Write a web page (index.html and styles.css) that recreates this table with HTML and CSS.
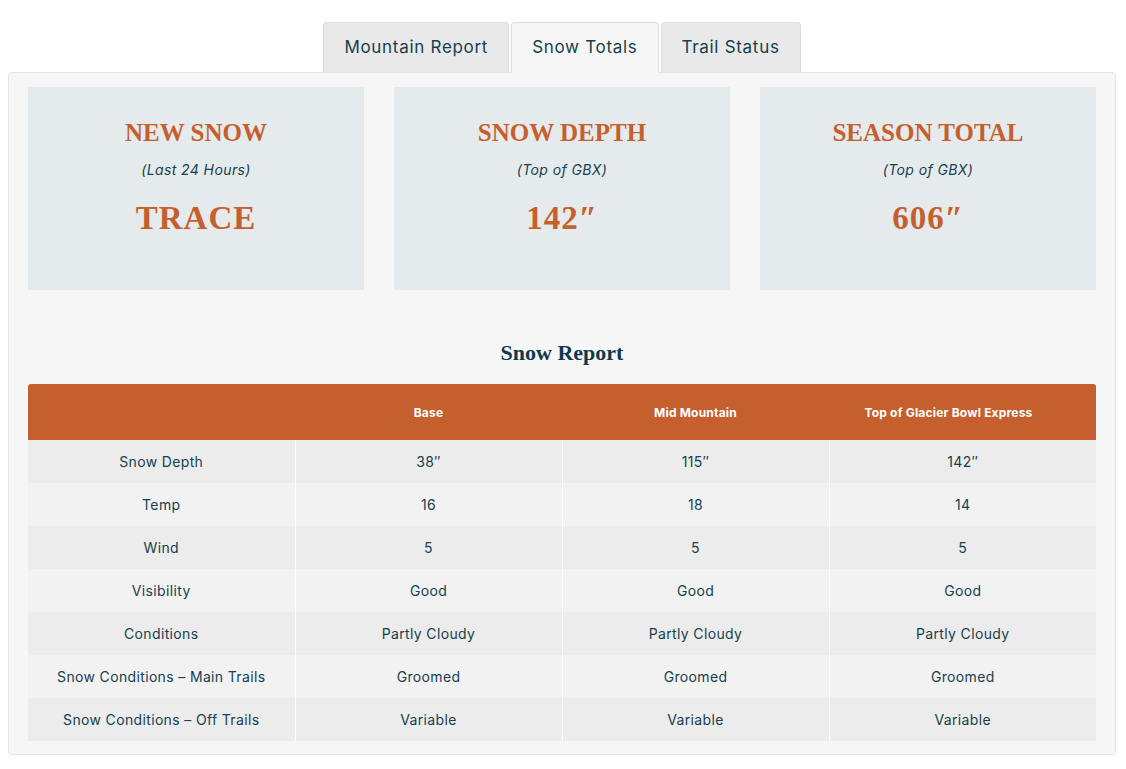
FILE: index.html
```html
<!DOCTYPE html>
<html lang="en">
<head>
  <meta charset="UTF-8">
  <title>Snow Totals</title>
  <meta name="viewport" content="width=device-width, initial-scale=1">
  <link rel="stylesheet" href="styles.css">
</head>
<body>
  <div class="report">
    <div class="tabs">
      <div class="tab">Mountain Report</div>
      <div class="tab active">Snow Totals</div>
      <div class="tab">Trail Status</div>
    </div>

    <div class="panel">
      <div class="cards">
        <div class="card">
          <h2>NEW SNOW</h2>
          <p class="sub">(Last 24 Hours)</p>
          <div class="value">TRACE</div>
        </div>
        <div class="card">
          <h2>SNOW DEPTH</h2>
          <p class="sub">(Top of GBX)</p>
          <div class="value">142″</div>
        </div>
        <div class="card">
          <h2>SEASON TOTAL</h2>
          <p class="sub">(Top of GBX)</p>
          <div class="value">606″</div>
        </div>
      </div>

      <h3 class="table-title">Snow Report</h3>

      <table class="snow-table">
        <thead>
          <tr>
            <th></th>
            <th>Base</th>
            <th>Mid Mountain</th>
            <th>Top of Glacier Bowl Express</th>
          </tr>
        </thead>
        <tbody>
          <tr><td>Snow Depth</td><td>38″</td><td>115″</td><td>142″</td></tr>
          <tr><td>Temp</td><td>16</td><td>18</td><td>14</td></tr>
          <tr><td>Wind</td><td>5</td><td>5</td><td>5</td></tr>
          <tr><td>Visibility</td><td>Good</td><td>Good</td><td>Good</td></tr>
          <tr><td>Conditions</td><td>Partly Cloudy</td><td>Partly Cloudy</td><td>Partly Cloudy</td></tr>
          <tr><td>Snow Conditions – Main Trails</td><td>Groomed</td><td>Groomed</td><td>Groomed</td></tr>
          <tr><td>Snow Conditions – Off Trails</td><td>Variable</td><td>Variable</td><td>Variable</td></tr>
        </tbody>
      </table>
    </div>
  </div>
</body>
</html>
```

FILE: styles.css
```css
body {
  margin: 0;
  background: #fff;
  font-family: 'Inter', 'Open Sans', sans-serif;
  color: #123f4e;
}

.report {
  padding: 22px 10px 0 8px;
}

.tabs {
  display: flex;
  justify-content: center;
  gap: 2px;
  position: relative;
  z-index: 1;
  margin-bottom: -1px;
}

.tab {
  height: 49px;
  line-height: 49px;
  padding: 0 20px;
  font-size: 17px;
  letter-spacing: 0.7px;
  color: #17404e;
  background: #e9e9e9;
  border: 1px solid #dcdcdc;
  border-bottom: none;
  border-radius: 4px 4px 0 0;
}

.tab.active {
  background: #f6f6f6;
  height: 50px;
}

.panel {
  background: #f6f6f6;
  border: 1px solid #e4e4e4;
  border-radius: 4px;
  padding: 14px 19px 13px;
}

.cards {
  display: grid;
  grid-template-columns: repeat(3, 1fr);
  gap: 30px;
}

.card {
  background: #e5eaec;
  height: 203px;
  text-align: center;
  padding-top: 31px;
  box-sizing: border-box;
}

.card h2 {
  margin: 0;
  font-family: 'Liberation Serif', serif;
  font-weight: bold;
  font-size: 25px;
  line-height: 30px;
  color: #c5602e;
}

.card .sub {
  margin: 13px 0 0;
  font-style: italic;
  font-size: 14px;
  line-height: 18px;
  letter-spacing: 0.4px;
  color: #17404e;
}

.card .value {
  margin-top: 19px;
  font-family: 'Liberation Serif', serif;
  font-weight: bold;
  font-size: 33px;
  line-height: 40px;
  letter-spacing: 1px;
  color: #c5602e;
}

.table-title {
  margin: 50px 0 18px;
  text-align: center;
  font-family: 'Liberation Serif', serif;
  font-weight: bold;
  font-size: 22px;
  line-height: 26px;
  color: #0d3b4a;
}

.snow-table {
  width: 100%;
  border-collapse: collapse;
  table-layout: fixed;
}

.snow-table th {
  background: #c5602e;
  color: #fff;
  font-size: 12px;
  font-weight: bold;
  letter-spacing: 0.2px;
  height: 56px;
  padding: 0;
}

.snow-table th:first-child {
  border-top-left-radius: 3px;
}

.snow-table th:last-child {
  border-top-right-radius: 3px;
  padding-right: 28px;
}

.snow-table td {
  height: 43px;
  padding: 0;
  text-align: center;
  font-size: 14px;
  letter-spacing: 0.35px;
  color: #17404e;
  border-left: 1px solid #fff;
}

.snow-table td:first-child {
  border-left: none;
}

.snow-table tbody tr:nth-child(odd) td {
  background: #ececec;
}

.snow-table tbody tr:nth-child(even) td {
  background: #f2f2f2;
}
```
